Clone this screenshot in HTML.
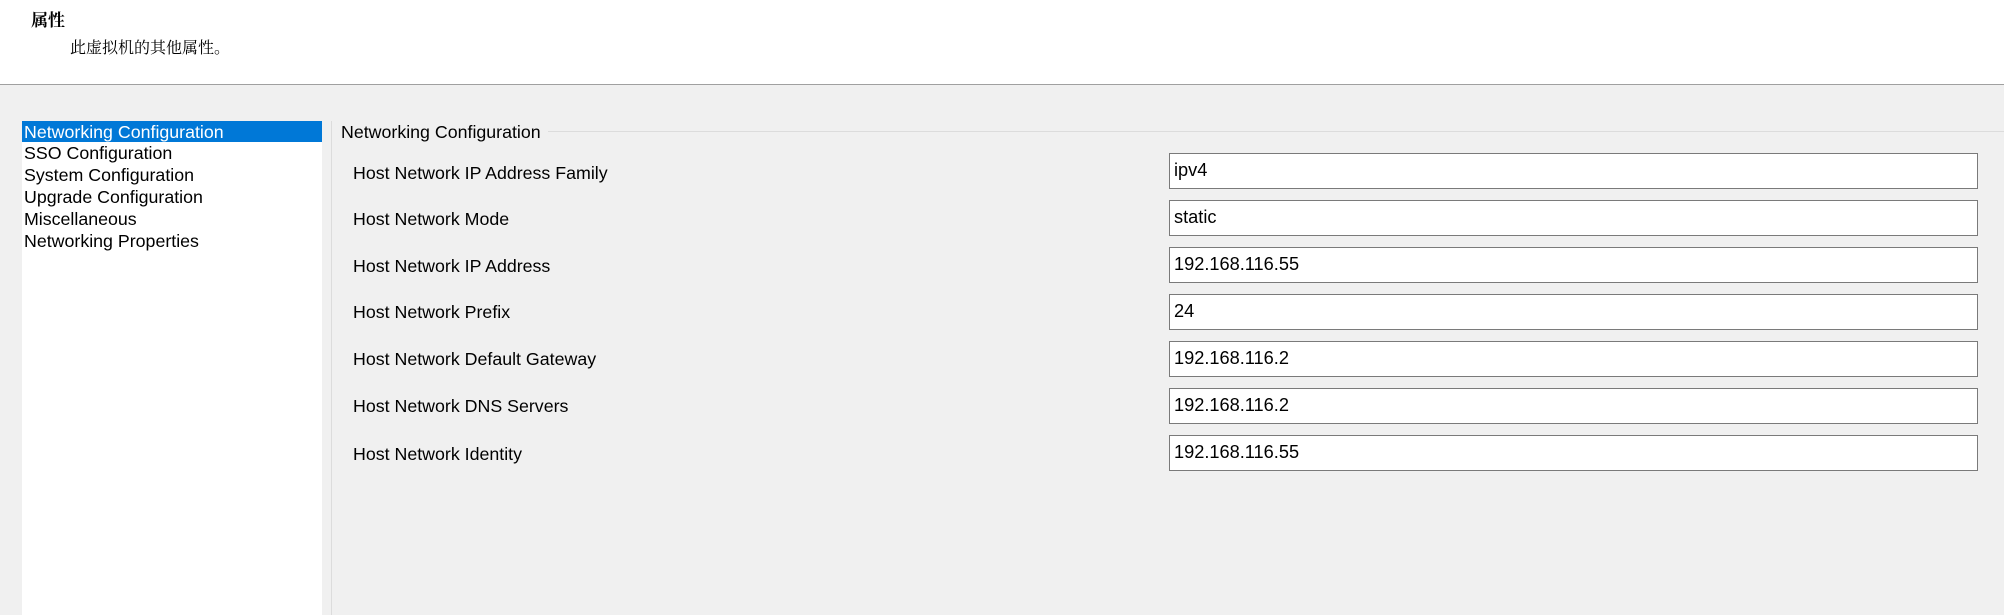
<!DOCTYPE html>
<html><head><meta charset="utf-8"><style>
body{margin:0;width:2004px;height:615px;overflow:hidden;background:#f0f0f0;font-family:"Liberation Sans","Noto Sans CJK SC",sans-serif;color:#000;position:relative}
.top{position:absolute;left:0;top:0;width:2004px;height:84px;background:#fff;border-bottom:1px solid #a0a0a0}
.t1{position:absolute;left:31px;top:6px;font-size:17px;font-weight:bold;font-family:"Noto Serif CJK SC","Noto Sans CJK SC",serif}
.t2{position:absolute;left:70px;top:35px;font-size:16px;font-family:"Noto Serif CJK SC","Noto Sans CJK SC",serif}
.list{position:absolute;left:22px;top:121px;width:300px;height:494px;background:#fff}
.it{position:absolute;left:2px;font-size:17.8px;line-height:22px;white-space:nowrap}
.sel{position:absolute;left:0;top:0;width:300px;height:21px;background:#0078d7}
.vline{position:absolute;left:331px;top:121px;width:1px;height:494px;background:#dcdcdc}
.gl{position:absolute;left:341px;top:121px;font-size:17.8px;line-height:22px}
.gline{position:absolute;left:548px;top:131px;width:1456px;height:1px;background:#dcdcdc}
.lab{position:absolute;left:353px;font-size:17.8px;line-height:22px;white-space:nowrap}
.inp{position:absolute;left:1169px;width:807px;height:34px;background:#fff;border:1px solid #7a7a7a;box-sizing:content-box}
.inp span{position:absolute;left:4px;top:5px;font-size:18.2px;line-height:22px}
</style></head><body>
<div class="top"><div class="t1">属性</div><div class="t2">此虚拟机的其他属性。</div></div>
<div class="list">
<div class="sel"></div>
<div class="it" style="top:0;color:#fff">Networking Configuration</div>
<div class="it" style="top:21px">SSO Configuration</div>
<div class="it" style="top:43px">System Configuration</div>
<div class="it" style="top:65px">Upgrade Configuration</div>
<div class="it" style="top:87px">Miscellaneous</div>
<div class="it" style="top:109px">Networking Properties</div>
</div>
<div class="vline"></div>
<div class="gl">Networking Configuration</div>
<div class="gline"></div>
<div class="lab" style="top:162px">Host Network IP Address Family</div>
<div class="lab" style="top:208px">Host Network Mode</div>
<div class="lab" style="top:255px">Host Network IP Address</div>
<div class="lab" style="top:301px">Host Network Prefix</div>
<div class="lab" style="top:348px">Host Network Default Gateway</div>
<div class="lab" style="top:395px">Host Network DNS Servers</div>
<div class="lab" style="top:443px">Host Network Identity</div>
<div class="inp" style="top:153px"><span>ipv4</span></div>
<div class="inp" style="top:200px"><span>static</span></div>
<div class="inp" style="top:247px"><span>192.168.116.55</span></div>
<div class="inp" style="top:294px"><span>24</span></div>
<div class="inp" style="top:341px"><span>192.168.116.2</span></div>
<div class="inp" style="top:388px"><span>192.168.116.2</span></div>
<div class="inp" style="top:435px"><span>192.168.116.55</span></div>
</body></html>
